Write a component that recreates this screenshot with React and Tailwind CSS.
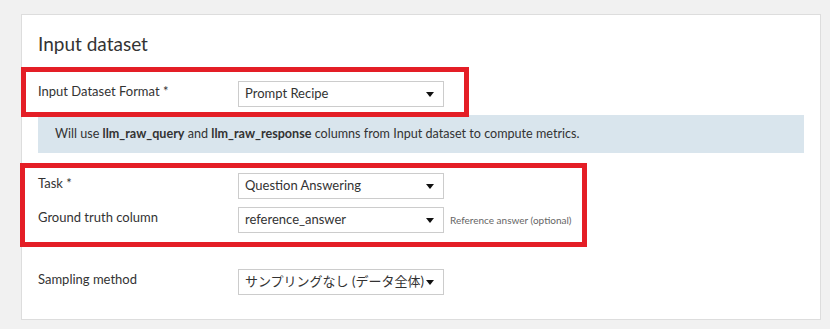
import React from "react";

const font = { fontFamily: '"Lato", "Noto Sans CJK JP", sans-serif' };

function Caret() {
  return (
    <svg width="8" height="5" viewBox="0 0 8 5" className="shrink-0">
      <path d="M0 0 L8 0 L4 5 Z" fill="#111" />
    </svg>
  );
}

function Select({ value }) {
  return (
    <div className="flex h-[26px] w-[206px] items-center border border-[#cccccc] bg-white pl-[6px] pr-[9px] text-[13px] text-[#333]">
      <span className="min-w-0 flex-1 overflow-hidden whitespace-nowrap">{value}</span>
      <Caret />
    </div>
  );
}

function Row({ label, value, help, className = "" }) {
  return (
    <div className={"flex items-start " + className}>
      <div className="w-[200px] pt-[1px] text-[13px] leading-[18px] text-[#333]">{label}</div>
      <Select value={value} />
      {help && (
        <div className="ml-[6px] self-center text-[10px] text-[#666]">{help}</div>
      )}
    </div>
  );
}

export default function App() {
  return (
    <div className="relative h-[329px] w-[830px] overflow-hidden bg-[#f1f1f1] pt-[14px] pl-[21px]" style={font}>
      <div className="h-[306px] w-[800px] border border-[#dddddd] bg-white px-[16px] pt-[17px]">
        <div className="text-[19px] leading-[24px] text-[#333]">Input dataset</div>
        <Row className="mt-[25px]" label="Input Dataset Format *" value="Prompt Recipe" />
        <div className="mt-[8px] flex h-[38px] w-[766px] items-center bg-[#d9e5ed] px-[17px] text-[12.6px] text-[#333]">
          <span>
            Will use <b>llm_raw_query</b> and <b>llm_raw_response</b> columns from Input dataset to compute metrics.
          </span>
        </div>
        <Row className="mt-[20px]" label="Task *" value="Question Answering" />
        <Row className="mt-[8px]" label="Ground truth column" value="reference_answer" help="Reference answer (optional)" />
        <Row className="mt-[36px]" label="Sampling method" value="サンプリングなし (データ全体)" />
      </div>
      <div className="absolute left-[21px] top-[67px] h-[50px] w-[448px] border-[5px] border-[#e41e26]" />
      <div className="absolute left-[20px] top-[163px] h-[84px] w-[567px] border-[5px] border-[#e41e26]" />
    </div>
  );
}
